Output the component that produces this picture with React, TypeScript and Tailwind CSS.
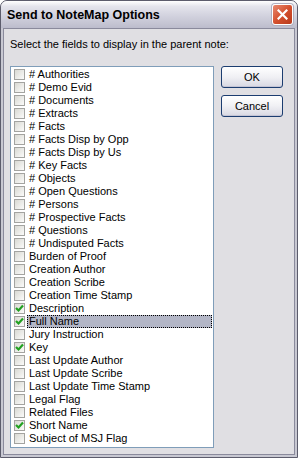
import React from "react";

const items: { label: string; checked?: boolean; focused?: boolean }[] = [
  { label: "# Authorities" },
  { label: "# Demo Evid" },
  { label: "# Documents" },
  { label: "# Extracts" },
  { label: "# Facts" },
  { label: "# Facts Disp by Opp" },
  { label: "# Facts Disp by Us" },
  { label: "# Key Facts" },
  { label: "# Objects" },
  { label: "# Open Questions" },
  { label: "# Persons" },
  { label: "# Prospective Facts" },
  { label: "# Questions" },
  { label: "# Undisputed Facts" },
  { label: "Burden of Proof" },
  { label: "Creation Author" },
  { label: "Creation Scribe" },
  { label: "Creation Time Stamp" },
  { label: "Description", checked: true },
  { label: "Full Name", checked: true, focused: true },
  { label: "Jury Instruction" },
  { label: "Key", checked: true },
  { label: "Last Update Author" },
  { label: "Last Update Scribe" },
  { label: "Last Update Time Stamp" },
  { label: "Legal Flag" },
  { label: "Related Files" },
  { label: "Short Name", checked: true },
  { label: "Subject of MSJ Flag" },
];

function CheckBox({ checked }: { checked?: boolean }) {
  return (
    <div className="w-[11px] h-[11px] border border-[#a3a3a0] bg-gradient-to-br from-[#d9d9d3] to-[#fbfbfa] flex items-center justify-center shrink-0">
      {checked && (
        <svg width="9" height="9" viewBox="0 0 9 9">
          <path d="M1 4 L3.5 6.5 L8 1.5" stroke="#21a121" strokeWidth="2.2" fill="none" />
        </svg>
      )}
    </div>
  );
}

function XPButton({ label }: { label: string }) {
  return (
    <div className="w-[62px] h-[22px] rounded-[3px] border border-[#1c3d70] bg-gradient-to-b from-[#ffffff] via-[#f0f0f4] to-[#d8d8e2] flex items-center justify-center text-[11px] text-black shadow-[inset_0_-1px_0_#c4c4d4]">
      {label}
    </div>
  );
}

export default function App() {
  return (
    <div
      className="w-[298px] h-[458px] flex flex-col overflow-hidden rounded-t-[7px] border border-[#5c5c6c] bg-[#c8c8d2]"
      style={{ fontFamily: '"Liberation Sans", Arial, sans-serif' }}
    >
      <div className="h-[27px] shrink-0 flex items-center justify-between pl-[6px] pr-[4px] bg-[linear-gradient(to_bottom,#ffffff_0%,#e4e4ec_20%,#d2d2de_55%,#c4c4d2_85%,#bcbccc_100%)]">
        <span className="text-[12.5px] font-bold text-black pt-[1px]">
          Send to NoteMap Options
        </span>
        <div className="w-[21px] h-[21px] rounded-[3px] border border-white bg-gradient-to-br from-[#e88a70] via-[#d4502e] to-[#b83a1c] flex items-center justify-center shadow-[0_0_0_1px_#b0b0c0]">
          <svg width="11" height="11" viewBox="0 0 11 11">
            <path d="M1.5 1.5 L9.5 9.5 M9.5 1.5 L1.5 9.5" stroke="white" strokeWidth="2.2" strokeLinecap="square" />
          </svg>
        </div>
      </div>
      <div className="flex-1 px-[2px] pb-[2px] flex">
        <div className="flex-1 border border-[#8a8a9c] bg-[#e0dfe3] flex flex-col pl-[6px] pr-[9px] pt-[9px] pb-[6px]">
          <div className="text-[11px] text-black leading-[13px] h-[13px]">
            Select the fields to display in the parent note:
          </div>
          <div className="flex-1 flex mt-[15px] gap-[7px]">
            <div className="w-[204px] border border-[#7f9db9] bg-white pt-[1px] flex flex-col">
              {items.map((it) => (
                <div key={it.label} className="h-[13px] flex items-center pl-[3px]">
                  <CheckBox checked={it.checked} />
                  <div
                    className={
                      it.focused
                        ? "ml-[2px] flex-1 mr-[1px] h-[13px] bg-[#b3b6c6] border border-dotted border-black flex items-center pl-[1px] text-[11px] text-black leading-[11px]"
                        : "ml-[4px] h-[13px] flex items-center text-[11px] text-black leading-[13px]"
                    }
                  >
                    {it.label}
                  </div>
                </div>
              ))}
            </div>
            <div className="flex flex-col gap-[7px]">
              <XPButton label="OK" />
              <XPButton label="Cancel" />
            </div>
          </div>
        </div>
      </div>
    </div>
  );
}
